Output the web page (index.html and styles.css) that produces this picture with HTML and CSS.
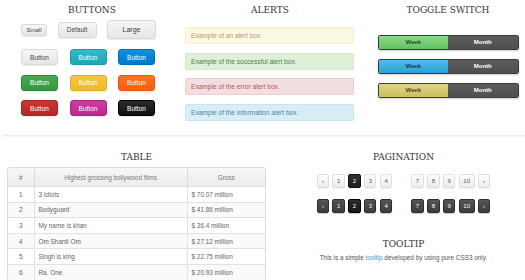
FILE: index.html
```html
<!DOCTYPE html>
<html lang="en">
<head>
    <meta charset="UTF-8">
    <meta name="viewport" content="width=device-width, initial-scale=1.0">
    <title>CSS3 UI Kit</title>
    <link rel="stylesheet" href="styles.css">
</head>
<body>
    <div class="page">
        <div class="row row-top">
            <section class="col">
                <h2>BUTTONS</h2>
                <div class="sizes">
                    <button class="btn btn-sm">Small</button>
                    <button class="btn btn-md">Default</button>
                    <button class="btn btn-lg">Large</button>
                </div>
                <div class="btn-grid">
                    <button class="btn">Button</button>
                    <button class="btn btn-teal">Button</button>
                    <button class="btn btn-blue">Button</button>
                    <button class="btn btn-green">Button</button>
                    <button class="btn btn-yellow">Button</button>
                    <button class="btn btn-orange">Button</button>
                    <button class="btn btn-red">Button</button>
                    <button class="btn btn-pink">Button</button>
                    <button class="btn btn-black">Button</button>
                </div>
            </section>

            <section class="col">
                <h2>ALERTS</h2>
                <div class="alerts">
                    <div class="alert alert-warning">Example of an alert box.</div>
                    <div class="alert alert-success">Example of the successful alert box.</div>
                    <div class="alert alert-error">Example of the error alert box.</div>
                    <div class="alert alert-info">Example of the information alert box.</div>
                </div>
            </section>

            <section class="col">
                <h2>TOGGLE SWITCH</h2>
                <div class="toggles">
                    <div class="toggle toggle-green"><span class="on">Week</span><span class="off">Month</span></div>
                    <div class="toggle toggle-blue"><span class="on">Week</span><span class="off">Month</span></div>
                    <div class="toggle toggle-yellow"><span class="on">Week</span><span class="off">Month</span></div>
                </div>
            </section>
        </div>

        <hr class="divider">

        <div class="row row-bottom">
            <section class="col">
                <h2>TABLE</h2>
                <div class="table-wrap">
                    <table>
                        <colgroup>
                            <col class="c-num">
                            <col>
                            <col class="c-gross">
                        </colgroup>
                        <thead>
                            <tr>
                                <th>#</th>
                                <th>Highest grossing bollywood films</th>
                                <th>Gross</th>
                            </tr>
                        </thead>
                        <tbody>
                            <tr><td>1</td><td>3 Idiots</td><td>$ 70.07 million</td></tr>
                            <tr><td>2</td><td>Bodyguard</td><td>$ 41.86 million</td></tr>
                            <tr><td>3</td><td>My name is khan</td><td>$ 36.4 million</td></tr>
                            <tr><td>4</td><td>Om Shanti Om</td><td>$ 27.12 million</td></tr>
                            <tr><td>5</td><td>Singh is king</td><td>$ 22.75 million</td></tr>
                            <tr><td>6</td><td>Ra. One</td><td>$ 20.93 million</td></tr>
                        </tbody>
                    </table>
                </div>
            </section>

            <section class="col">
                <h2>PAGINATION</h2>
                <ul class="pager">
                    <li><a href="#">&lsaquo;</a></li>
                    <li><a href="#">1</a></li>
                    <li><a href="#" class="active">2</a></li>
                    <li><a href="#">3</a></li>
                    <li><a href="#">4</a></li>
                    <li class="dots">&hellip;</li>
                    <li><a href="#">7</a></li>
                    <li><a href="#">8</a></li>
                    <li><a href="#">9</a></li>
                    <li><a href="#">10</a></li>
                    <li><a href="#">&rsaquo;</a></li>
                </ul>
                <ul class="pager pager-dark">
                    <li><a href="#">&lsaquo;</a></li>
                    <li><a href="#">1</a></li>
                    <li><a href="#" class="active">2</a></li>
                    <li><a href="#">3</a></li>
                    <li><a href="#">4</a></li>
                    <li class="dots">&hellip;</li>
                    <li><a href="#">7</a></li>
                    <li><a href="#">8</a></li>
                    <li><a href="#">9</a></li>
                    <li><a href="#">10</a></li>
                    <li><a href="#">&rsaquo;</a></li>
                </ul>

                <h2 class="tooltip-title">TOOLTIP</h2>
                <p class="tip">This is a simple <a href="#">tooltip</a> developed by using pure CSS3 only.</p>
            </section>
        </div>
    </div>
</body>
</html>
```

FILE: styles.css
```css
html, body {
    overflow: hidden;
}

body {
    margin: 0;
    background-color: #fff;
    font-family: 'Liberation Sans', Arial, sans-serif;
    color: #555;
}

.page {
    width: 534px;
    margin-left: 3px;
    padding-top: 4px;
}

.row {
    display: grid;
}

.row-top {
    grid-template-columns: repeat(3, 178px);
}

.row-bottom {
    grid-template-columns: repeat(2, 267px);
    margin-top: 15px;
}

h2 {
    font-family: 'DejaVu Serif', 'Liberation Serif', serif;
    font-size: 9px;
    line-height: 12px;
    font-weight: normal;
    color: #333;
    text-align: center;
    margin: 0;
}

/* buttons */

.sizes {
    display: flex;
    align-items: center;
    gap: 10.5px;
    margin: 4px 0 0 18px;
}

.btn-grid {
    display: grid;
    grid-template-columns: repeat(3, 37px);
    column-gap: 11.5px;
    row-gap: 9.5px;
    margin: 10px 0 0 18px;
}

.btn {
    font-family: inherit;
    font-size: 6.5px;
    height: 16px;
    padding: 0;
    color: #444;
    background: linear-gradient(#f6f6f6, #e6e6e6);
    border: 1px solid #dadada;
    border-radius: 3px;
    box-shadow: 0 1px 1px rgba(0, 0, 0, 0.08);
    cursor: pointer;
}

.btn-sm {
    width: 26px;
    height: 12px;
    font-size: 6px;
}

.btn-md {
    width: 39px;
}

.btn-lg {
    width: 49px;
    height: 19px;
    font-size: 7px;
}

.btn-teal {
    color: #fff;
    background: linear-gradient(#33bccb, #21a5b4);
    border-color: #1d99a7;
}

.btn-blue {
    color: #fff;
    background: linear-gradient(#1490dc, #0078c6);
    border-color: #006fb6;
}

.btn-green {
    color: #fff;
    background: linear-gradient(#46ab50, #36963f);
    border-color: #2f8a37;
}

.btn-yellow {
    color: #fff;
    background: linear-gradient(#f6c93c, #eeb928);
    border-color: #e3ad1d;
}

.btn-orange {
    color: #fff;
    background: linear-gradient(#ff7322, #f95d0b);
    border-color: #ec5305;
}

.btn-red {
    color: #fff;
    background: linear-gradient(#cb3533, #b52826);
    border-color: #a82321;
}

.btn-pink {
    color: #fff;
    background: linear-gradient(#cd3ba2, #b72c8c);
    border-color: #a82681;
}

.btn-black {
    color: #fff;
    background: linear-gradient(#2a2a2a, #111);
    border-color: #000;
}

/* alerts */

.alerts {
    margin: 11px 5px 0 4px;
}

.alert {
    height: 17px;
    box-sizing: border-box;
    padding: 0 5px;
    margin-bottom: 8.5px;
    font-size: 6.6px;
    line-height: 15px;
    border: 1px solid;
    border-radius: 2px;
}

.alert-warning {
    color: #b59c6c;
    background-color: #fcf8e3;
    border-color: #f9efcf;
}

.alert-success {
    color: #4d7f4d;
    background-color: #dff0d8;
    border-color: #d3e9c8;
}

.alert-error {
    color: #b4575a;
    background-color: #f2dede;
    border-color: #ebcfd2;
}

.alert-info {
    color: #55819f;
    background-color: #d9edf7;
    border-color: #c8e5f1;
}

/* toggle switch */

.toggles {
    margin-top: 19px;
}

.toggle {
    display: flex;
    width: 141px;
    height: 15px;
    box-sizing: border-box;
    margin: 0 auto 9px;
    border: 1px solid #3b3b3b;
    border-radius: 2px;
    overflow: hidden;
    font-size: 6px;
    font-weight: bold;
    line-height: 13px;
    text-align: center;
    box-shadow: 0 1px 2px rgba(0, 0, 0, 0.2);
}

.toggle span {
    flex: 1;
}

.toggle .on {
    color: rgba(0, 0, 0, 0.7);
}

.toggle .off {
    color: #fff;
    background: linear-gradient(#5c5c5c, #4f4f4f);
}

.toggle-green .on {
    background: linear-gradient(#8ddc8a, #62c25f);
}

.toggle-blue .on {
    background: linear-gradient(#50bdec, #2aa2d8);
}

.toggle-yellow .on {
    background: linear-gradient(#ddd68a, #c9bf5e);
}

/* divider */

.divider {
    margin: 6px 0 0;
    border: 0;
    border-top: 1px solid #ececec;
    box-shadow: 0 1px 1px #f6f6f6;
}

/* table */

.table-wrap {
    margin: 4px 4px 0;
    border: 1px solid #dcdcdc;
    border-radius: 3px;
    overflow: hidden;
}

table {
    width: 100%;
    border-collapse: collapse;
    font-size: 6.4px;
    color: #666;
}

.c-num {
    width: 26px;
}

.c-gross {
    width: 78px;
}

th {
    height: 18px;
    padding: 0;
    font-weight: normal;
    color: #777;
    background: linear-gradient(#f7f7f7, #ececec);
    border-left: 1px solid #dcdcdc;
}

td {
    height: 14.6px;
    padding: 0 4px;
    border-top: 1px solid #e2e2e2;
    border-left: 1px solid #e2e2e2;
}

th:first-child,
td:first-child {
    border-left: none;
}

td:first-child {
    text-align: center;
}

tbody tr:nth-child(even) {
    background-color: #fafafa;
}

/* pagination */

.pager {
    display: flex;
    justify-content: center;
    gap: 3.5px;
    list-style: none;
    padding: 0;
    margin: 11px 0 0;
}

.pager + .pager {
    margin-top: 11px;
}

.pager li {
    min-width: 12px;
    height: 14px;
}

.pager a {
    display: block;
    min-width: 12px;
    height: 14px;
    box-sizing: border-box;
    padding: 0 3.5px;
    font-size: 6px;
    line-height: 12px;
    text-align: center;
    text-decoration: none;
    color: #555;
    background: linear-gradient(#fdfdfd, #ececec);
    border: 1px solid #dedede;
    border-radius: 2px;
    box-shadow: 0 1px 1px rgba(0, 0, 0, 0.06);
}

.pager a.active {
    color: #fff;
    background: linear-gradient(#333, #1c1c1c);
    border-color: #111;
}

.pager .dots {
    font-size: 6px;
    line-height: 16px;
    text-align: center;
    color: #c8c8c8;
}

.pager-dark a {
    color: #fff;
    background: linear-gradient(#555, #3c3c3c);
    border-color: #2f2f2f;
    box-shadow: 0 1px 1px rgba(0, 0, 0, 0.2);
}

.pager-dark a.active {
    background: linear-gradient(#2a2a2a, #161616);
    border-color: #000;
}

/* tooltip */

.tooltip-title {
    margin-top: 25px;
}

.tip {
    margin: 4px 0 0;
    font-size: 6.4px;
    line-height: 8px;
    text-align: center;
    color: #555;
}

.tip a {
    color: #3a9ad9;
    text-decoration: none;
}
```
